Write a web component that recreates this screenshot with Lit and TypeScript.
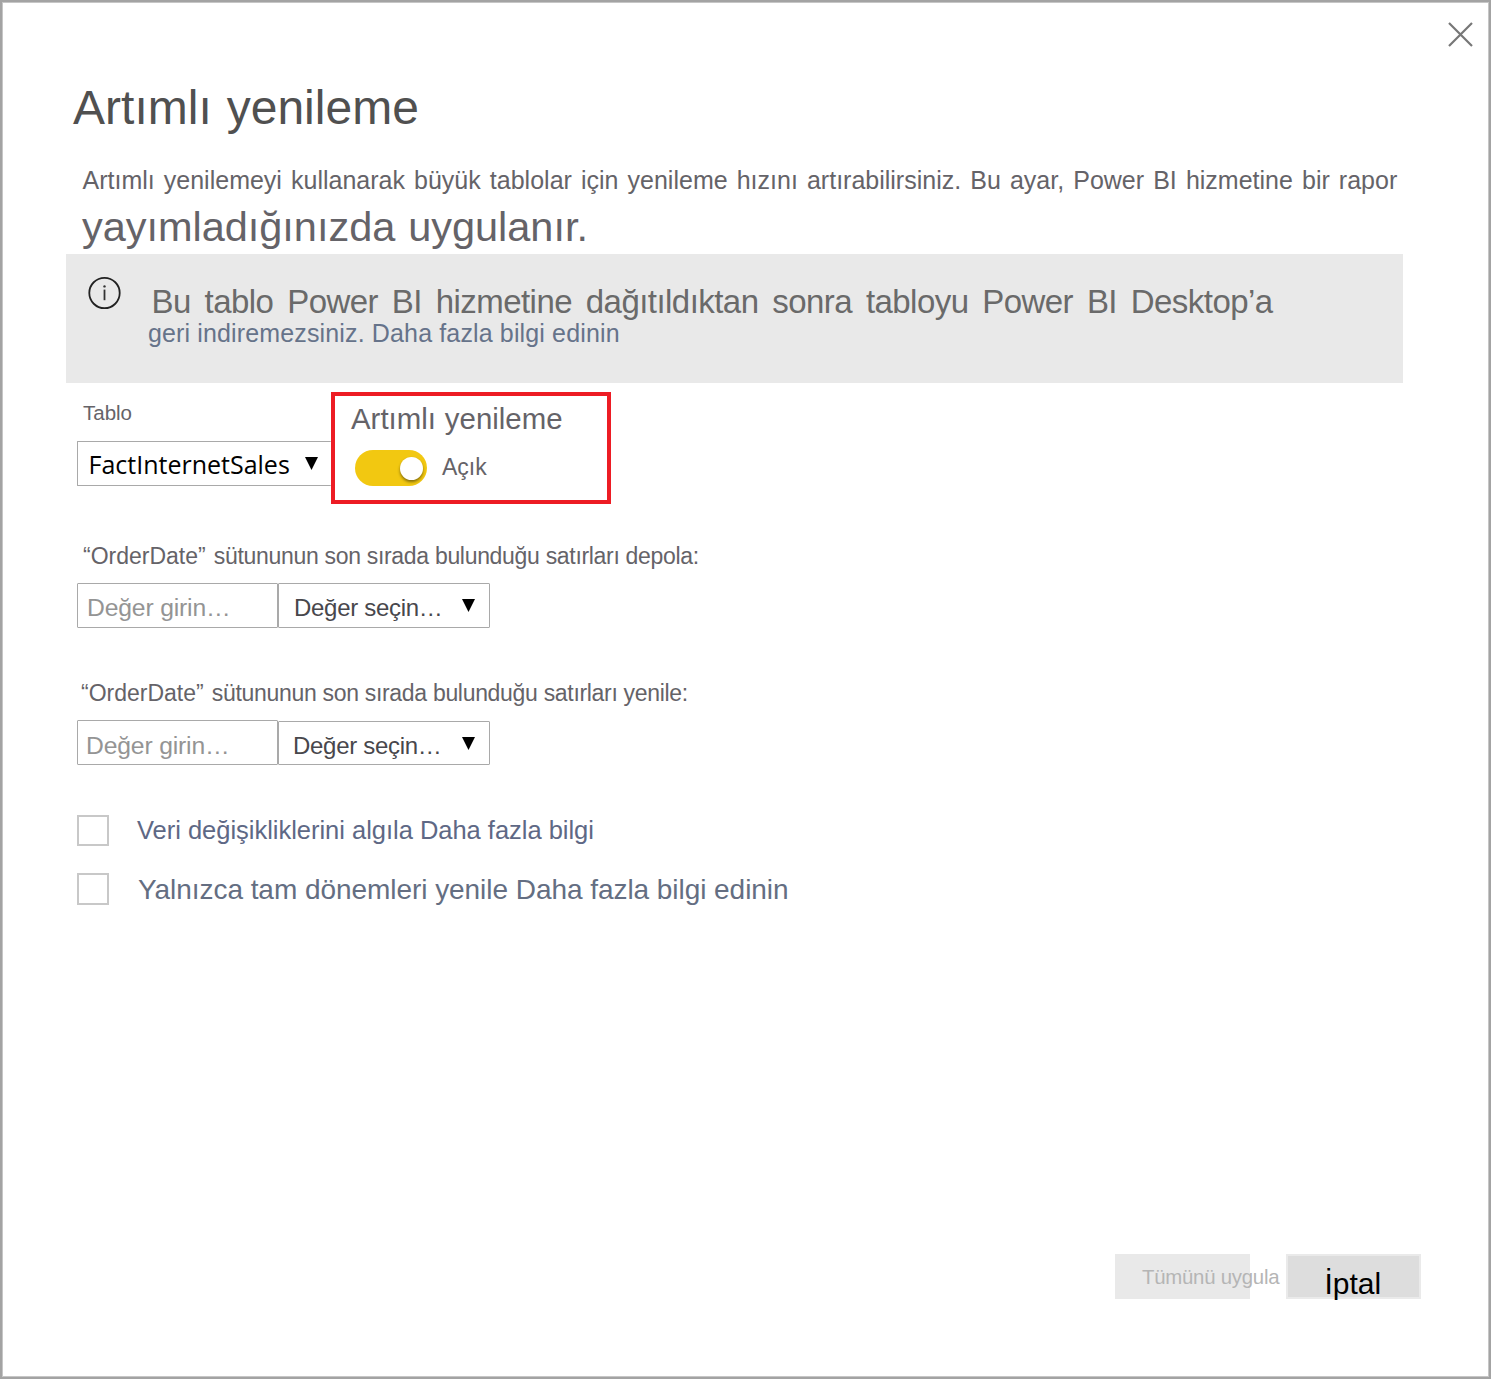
import { LitElement, html, css, svg } from "lit";
import { customElement } from "lit/decorators.js";

const arrow = () => html`<svg class="arrow" viewBox="0 0 14 13" width="14" height="13" aria-hidden="true">
  ${svg`<path d="M0 0H13L6.5 13Z" fill="#000"/>`}
</svg>`;

@customElement("app-root")
export class AppRoot extends LitElement {
  static styles = css`
    :host {
      display: block;
      font-family: "Liberation Sans", Arial, sans-serif;
      color: #656368;
      white-space: nowrap;
    }
    * {
      box-sizing: border-box;
      margin: 0;
    }
    svg {
      display: block;
      flex: none;
    }
    .dialog {
      position: relative;
      display: flex;
      flex-direction: column;
      height: 1379px;
      padding: 79px 68px 78px 74px;
      border: 2px solid #a3a3a3;
      box-shadow: inset 0 0 0 1px #c6c6c6;
      background: #fff;
    }
    .close {
      position: absolute;
      top: 20px;
      right: 16px;
      padding: 0;
      border: 0;
      background: none;
    }
    h1 {
      margin-left: -3px;
      font-size: 48px;
      font-weight: 400;
      line-height: 54px;
      letter-spacing: 0.03px;
      word-spacing: 1.4px;
      color: #505050;
    }
    .intro {
      margin: 30px 0 0 6.5px;
      font-size: 25px;
      line-height: 30px;
      word-spacing: 2.15px;
    }
    .intro-more {
      margin: 8px 0 0 6px;
      font-size: 41.5px;
      line-height: 48px;
      letter-spacing: -0.03px;
      word-spacing: 1.5px;
    }
    .banner {
      display: flex;
      flex: none;
      gap: 27px;
      width: 1337px;
      height: 129px;
      margin: 3px 0 0 -10px;
      padding: 22px 0 0 21px;
      background: #e9e9e9;
    }
    .banner-text {
      padding-top: 9px;
    }
    .banner-main {
      margin-left: 3.5px;
      font-size: 33px;
      line-height: 33px;
      letter-spacing: -0.55px;
      word-spacing: 5.2px;
      color: #6a6a6a;
    }
    .banner-link {
      margin-top: 1px;
      font-size: 25px;
      line-height: 28px;
      letter-spacing: 0.14px;
      color: #66738a;
    }
    .settings {
      display: flex;
      margin: 9px 0 0 1px;
    }
    .table-col {
      width: 254px;
      padding-top: 9px;
    }
    .table-label {
      padding-left: 6px;
      font-size: 20.5px;
      line-height: 24px;
    }
    .box {
      display: flex;
      height: 45px;
      border: 1px solid #a9a9a9;
      border-radius: 1px;
      background: #fff;
    }
    .table-select {
      justify-content: space-between;
      margin-top: 16px;
      padding: 0 12px 0 10.5px;
      border-right: 0;
      font-family: "Open Sans", "Noto Sans", sans-serif;
      font-size: 25px;
      line-height: 45px;
      color: #000;
    }
    .table-select .arrow {
      margin-top: 15px;
    }
    .highlight {
      width: 280px;
      height: 112px;
      padding: 6px 0 0 16px;
      border: 4px solid #ed1c24;
    }
    .highlight-title {
      font-size: 29.4px;
      line-height: 34px;
      word-spacing: 0.8px;
    }
    .switch-row {
      display: flex;
      gap: 15px;
      margin: 14px 0 0 4px;
      font-size: 23px;
      line-height: 34px;
    }
    .switch {
      display: flex;
      justify-content: flex-end;
      width: 72px;
      height: 36px;
      padding: 7px 4px 0 0;
      border-radius: 18px;
      background: #f2c811;
    }
    .knob {
      width: 23px;
      height: 23px;
      border-radius: 50%;
      background: #fff;
      box-shadow: 0 2px 3px rgba(0, 0, 0, 0.45);
    }
    .period {
      margin: 38px 0 0 1px;
    }
    .period-label {
      padding-left: 6px;
      font-size: 23px;
      line-height: 28px;
      letter-spacing: -0.31px;
    }
    .column-name {
      margin-right: 2px;
      letter-spacing: 0;
    }
    .fields {
      display: flex;
      align-items: flex-end;
      margin-top: 13px;
    }
    .value {
      width: 201px;
      padding: 2px 0 0 9px;
      font-size: 24.7px;
      line-height: 43px;
      letter-spacing: -0.16px;
      color: #949494;
    }
    .unit {
      justify-content: space-between;
      width: 212px;
      padding: 2px 13px 0 15px;
      font-size: 24px;
      line-height: 43px;
      letter-spacing: -0.3px;
      color: #48474c;
    }
    .unit .arrow {
      margin-top: 13px;
    }
    .refresh {
      margin-top: 51px;
    }
    .refresh .period-label {
      padding-left: 4px;
    }
    .refresh .value {
      padding: 3px 0 0 8px;
    }
    .refresh .unit {
      height: 44px;
      padding: 2px 13px 0 14px;
    }
    .option {
      display: flex;
      gap: 28px;
      margin: 50px 0 0 1px;
      font-size: 25.5px;
      line-height: 31px;
      letter-spacing: -0.02px;
      color: #5e6885;
    }
    .check {
      width: 32px;
      height: 31px;
      border: 2px solid #c8c8c8;
    }
    .whole {
      margin-top: 27px;
      font-size: 28px;
      line-height: 34px;
      height: 32px;
      letter-spacing: -0.05px;
      color: #646e82;
    }
    .whole .check {
      height: 32px;
    }
    .whole span {
      padding-left: 1px;
    }
    .footer {
      display: flex;
      justify-content: flex-end;
      gap: 36px;
      margin-top: auto;
    }
    .btn {
      flex: none;
      width: 135px;
      height: 45px;
      padding: 0;
      border: 0;
      border-radius: 0;
      font-family: inherit;
      text-align: left;
    }
    .apply {
      padding-left: 27px;
      background: #e9e9e9;
      font-size: 20.4px;
      line-height: 46px;
      letter-spacing: -0.25px;
      color: #b5b5b5;
    }
    .cancel {
      padding: 7px 0 0 36.5px;
      border: 2px solid #eaeaea;
      background: #ddd;
      font-size: 30px;
      line-height: 41px;
      color: #000;
    }
  `;

  private period(label: string, cls: string) {
    return html`<section class="period ${cls}">
      <div class="period-label"><span class="column-name">“OrderDate”</span> ${label}</div>
      <div class="fields">
        <div class="box value">Değer girin…</div>
        <div class="box unit"><span>Değer seçin…</span>${arrow()}</div>
      </div>
    </section>`;
  }

  render() {
    return html`<div class="dialog" role="dialog">
      <button class="close">
        <svg viewBox="0 0 25 25" width="25" height="25">
          <path d="M1 1L24 24M24 1L1 24" stroke="#777" stroke-width="2.2" fill="none" />
        </svg>
      </button>
      <h1>Artımlı yenileme</h1>
      <p class="intro">Artımlı yenilemeyi kullanarak büyük tablolar için yenileme hızını artırabilirsiniz. Bu ayar, Power BI hizmetine bir rapor</p>
      <p class="intro-more">yayımladığınızda uygulanır.</p>
      <div class="banner">
        <svg viewBox="0 0 34 34" width="34" height="34">
          <circle cx="17.5" cy="17" r="15.2" fill="none" stroke="#222" stroke-width="1.8" />
          <path d="M17.5 13.6V24.2" stroke="#333" stroke-width="1.8" />
          <circle cx="17.5" cy="10.4" r="1.2" fill="#333" />
        </svg>
        <div class="banner-text">
          <div class="banner-main">Bu tablo Power BI hizmetine dağıtıldıktan sonra tabloyu Power BI Desktop’a</div>
          <div class="banner-link">geri indiremezsiniz. Daha fazla bilgi edinin</div>
        </div>
      </div>
      <div class="settings">
        <div class="table-col">
          <div class="table-label">Tablo</div>
          <div class="box table-select"><span>FactInternetSales</span>${arrow()}</div>
        </div>
        <div class="highlight">
          <div class="highlight-title">Artımlı yenileme</div>
          <div class="switch-row">
            <div class="switch"><div class="knob"></div></div>
            <span>Açık</span>
          </div>
        </div>
      </div>
      ${this.period("sütununun son sırada bulunduğu satırları depola:", "store")}
      ${this.period("sütununun son sırada bulunduğu satırları yenile:", "refresh")}
      <div class="option"><div class="check"></div><span>Veri değişikliklerini algıla Daha fazla bilgi</span></div>
      <div class="option whole"><div class="check"></div><span>Yalnızca tam dönemleri yenile Daha fazla bilgi edinin</span></div>
      <div class="footer">
        <button class="btn apply">Tümünü uygula</button>
        <button class="btn cancel">İptal</button>
      </div>
    </div>`;
  }
}
